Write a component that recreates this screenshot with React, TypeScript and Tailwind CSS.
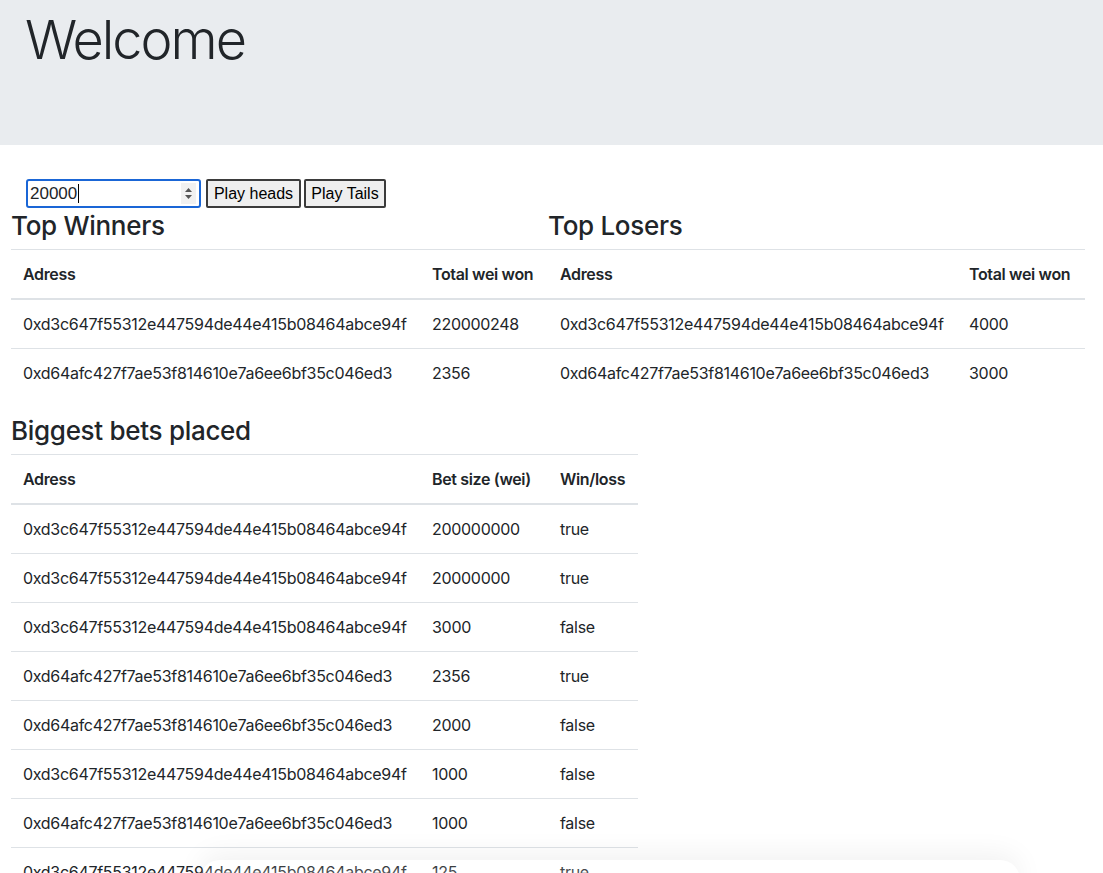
import React from "react";

const A1 = "0xd3c647f55312e447594de44e415b08464abce94f";
const A2 = "0xd64afc427f7ae53f814610e7a6ee6bf35c046ed3";

const winners = [
  [A1, "220000248"],
  [A2, "2356"],
];

const losers = [
  [A1, "4000"],
  [A2, "3000"],
];

const bets = [
  [A1, "200000000", "true"],
  [A1, "20000000", "true"],
  [A1, "3000", "false"],
  [A2, "2356", "true"],
  [A2, "2000", "false"],
  [A1, "1000", "false"],
  [A2, "1000", "false"],
  [A1, "125", "true"],
];

const th = "px-3 py-3 text-left align-bottom whitespace-nowrap font-semibold tracking-[-0.35px] border-t border-b-2 border-[#dee2e6] leading-6";
const td = "px-3 py-3 align-top whitespace-nowrap border-t border-[#dee2e6] leading-6";

function Table({ heads, rows, widths }: { heads: string[]; rows: string[][]; widths: string[] }) {
  return (
    <table className="border-collapse table-fixed mb-[17px]">
      <thead>
        <tr>
          {heads.map((h, i) => (
            <th key={h + i} className={`${th} ${widths[i]}`}>
              {h}
            </th>
          ))}
        </tr>
      </thead>
      <tbody>
        {rows.map((r, i) => (
          <tr key={i}>
            {r.map((c, j) => (
              <td key={j} className={td}>
                {c}
              </td>
            ))}
          </tr>
        ))}
      </tbody>
    </table>
  );
}

export default function App() {
  return (
    <div className="relative h-[873px] overflow-hidden bg-white text-[16px] tracking-[-0.3px] text-[#212529] font-['Inter','Liberation_Sans',sans-serif]">
      {/* Jumbotron */}
      <div className="h-[145px] bg-[#e9ecef] px-[25px] pt-[8px]">
        <h1 className="text-[54px] font-light leading-[1.2] tracking-[-2px]">Welcome</h1>
      </div>

      {/* Bet controls */}
      <div className="mt-[34px] ml-[26px] flex items-center tracking-normal">
        <div className="flex h-[29px] w-[175px] items-center rounded-[3px] border-2 border-[#1a66d6] pl-[2px] pr-[3px]">
          <span className="font-['Liberation_Sans',sans-serif] text-[17px] leading-none">20000</span>
          <span className="ml-[1px] h-[19px] w-px bg-black" />
          <div className="ml-auto flex h-[21px] w-[15px] flex-col items-center justify-center gap-[3px] bg-[#f1f1f1]">
            <svg width="7" height="4" viewBox="0 0 7 4">
              <path d="M0 4 L3.5 0 L7 4 Z" fill="#555" />
            </svg>
            <svg width="7" height="4" viewBox="0 0 7 4">
              <path d="M0 0 L3.5 4 L7 0 Z" fill="#555" />
            </svg>
          </div>
        </div>
        <button className="ml-[5px] h-[29px] w-[95px] rounded-[2px] border-2 border-[#3b3b3b] bg-[#efefef] font-['Liberation_Sans',sans-serif] text-[16px] text-black">
          Play heads
        </button>
        <button className="ml-[3px] h-[29px] w-[82px] rounded-[2px] border-2 border-[#3b3b3b] bg-[#efefef] font-['Liberation_Sans',sans-serif] text-[16px] text-black">
          Play Tails
        </button>
      </div>

      {/* Tables */}
      <div className="px-[11px]">
        <div className="flex">
          <div className="w-[537px]">
            <h3 className="mb-[6px] pt-[2px] text-[26px] font-medium leading-[1.25] tracking-[-0.3px]">Top Winners</h3>
            <Table heads={["Adress", "Total wei won"]} rows={winners} widths={["w-[409px]", "w-[128px]"]} />
          </div>
          <div className="w-[537px]">
            <h3 className="mb-[6px] pt-[2px] text-[26px] font-medium leading-[1.25] tracking-[-0.3px]">Top Losers</h3>
            <Table heads={["Adress", "Total wei won"]} rows={losers} widths={["w-[409px]", "w-[128px]"]} />
          </div>
        </div>
        <h3 className="mb-[7px] pt-[1px] text-[26px] font-medium leading-[1.25] tracking-[-0.3px]">Biggest bets placed</h3>
        <Table
          heads={["Adress", "Bet size (wei)", "Win/loss"]}
          rows={bets}
          widths={["w-[409px]", "w-[128px]", "w-[90px]"]}
        />
      </div>

      {/* faded overlay at bottom edge */}
      <div className="pointer-events-none absolute left-[200px] top-[860px] h-[40px] w-[820px] rounded-[40px] bg-linear-to-b from-white/0 to-white/70 shadow-[0_-6px_28px_rgba(0,0,0,0.06)]" />
    </div>
  );
}
